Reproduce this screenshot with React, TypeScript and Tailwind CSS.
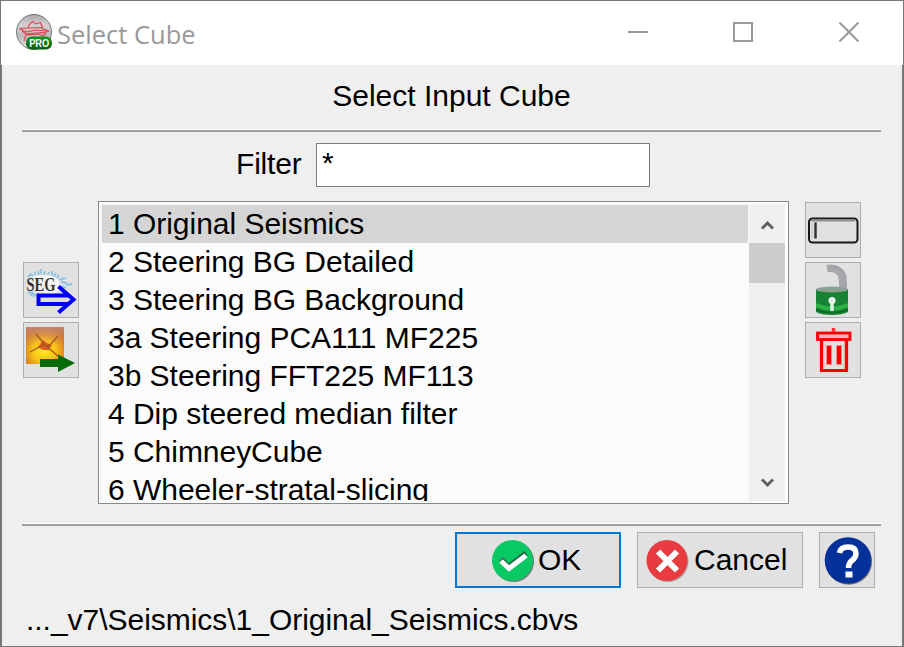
import type { ReactNode } from 'react';

const cubes = [
  '1 Original Seismics',
  '2 Steering BG Detailed',
  '3 Steering BG Background',
  '3a Steering PCA111 MF225',
  '3b Steering FFT225 MF113',
  '4 Dip steered median filter',
  '5 ChimneyCube',
  '6 Wheeler-stratal-slicing',
];

function IconButton({ label, children }: { label: string; children: ReactNode }) {
  return (
    <button
      aria-label={label}
      className="flex h-14 w-14 shrink-0 items-center justify-center border border-[#adadad] bg-[#e1e1e1]"
    >
      {children}
    </button>
  );
}

function Separator() {
  return <div className="mr-[21px] ml-5 h-[3px] shrink-0 border-t border-white bg-[#a0a0a0]" />;
}

function AppLogo() {
  return (
    <svg width="38" height="38" viewBox="0 0 38 38" className="shrink-0">
      <defs>
        <linearGradient id="orb" x1="0" y1="0" x2="0" y2="1">
          <stop offset="0" stopColor="#a8a8a8" />
          <stop offset="0.3" stopColor="#d2d2d2" />
          <stop offset="0.6" stopColor="#bcbcbc" />
          <stop offset="1" stopColor="#e0e0e0" />
        </linearGradient>
        <linearGradient id="pro" x1="0" y1="0" x2="0" y2="1">
          <stop offset="0" stopColor="#169422" />
          <stop offset="1" stopColor="#075c12" />
        </linearGradient>
      </defs>
      <circle cx="19" cy="19" r="17.500" fill="url(#orb)" stroke="#777" strokeWidth="1" />
      <path
        d="M4.500 15.500L13 15L14 12L17.500 8.500L21 11L25.500 9.500L28 16L34 18M4.500 15.500L11 19L21 17L34 18.500M13 15L28 14.500M7 18L11 21L27 19.500L31 20L28 23L24 21L11 22L9 28"
        fill="none"
        stroke="#e5424c"
        strokeWidth="1.100"
      />
      <rect x="11" y="23.500" width="26" height="13" rx="6" fill="url(#pro)" />
      <text x="24.200" y="33.500" textAnchor="middle" textLength="20" lengthAdjust="spacingAndGlyphs" fontFamily="Liberation Sans, sans-serif" fontSize="10" fontWeight="700" fill="#fff">
        PRO
      </text>
    </svg>
  );
}

function SegIcon() {
  return (
    <svg width="54" height="54" viewBox="0 0 54 54">
      <path
        d="M4 14l3-3M7 11l2 2M10 9l2 3M14 8l1 4M17 6v5M21 8l-1 4M25 9l-1 3M28 8v5M32 10l-2 4M35 12l-2 3M39 15l-4 2M43 20l-6-1M48 21l-6 1M42 25l-5-2M4 30l5-1M6 33l4-3M12 31l-3 3M3 17l3 1M37 17l5-2"
        stroke="#8cc3e2"
        strokeWidth="1.800"
      />
      <path d="M4 16L15 12L29 13L35 18L36 27L29 31L5 28Z" fill="#f5f5f5" />
      <text x="2.500" y="27.500" textLength="29" lengthAdjust="spacingAndGlyphs" fontFamily="Liberation Serif, serif" fontSize="18" fontWeight="700" fill="#333">
        SEG
      </text>
      <path d="M14 31H35V26L34 24L49.500 36.500L34 49.500L36 46V42H14Z" fill="#dedede" />
      <path d="M34.500 23.500L49.500 36.500L34.500 49.500M44 32.500H14.500V41H44" fill="none" stroke="#0000fa" strokeWidth="4" />
    </svg>
  );
}

function ExportIcon() {
  return (
    <svg width="54" height="54" viewBox="0 0 54 54">
      <defs>
        <radialGradient id="amber" cx="48%" cy="65%" r="75%">
          <stop offset="0" stopColor="#ffe91f" />
          <stop offset="0.400" stopColor="#f9c51b" />
          <stop offset="0.700" stopColor="#dc851e" />
          <stop offset="1" stopColor="#b34a20" />
        </radialGradient>
        <linearGradient id="amberTop" x1="0" y1="0" x2="0" y2="1">
          <stop offset="0" stopColor="#c38270" />
          <stop offset="0.500" stopColor="#e19b52" stopOpacity="0" />
        </linearGradient>
      </defs>
      <rect x="2" y="4" width="38" height="37" rx="1" fill="url(#amber)" />
      <rect x="2" y="4" width="38" height="37" rx="1" fill="url(#amberTop)" />
      <path d="M14 24L19 17L23 20L28 22L25 27L19 27Z" fill="#df5926" />
      <path d="M12 11L21 22L34 33M34 13L25 23L19 22L6 29" fill="none" stroke="#a6561d" strokeWidth="1.300" />
      <path d="M16 36H34V31.500L51 40L34 49V44H16Z" fill="#066b07" />
    </svg>
  );
}

function FieldIcon() {
  return (
    <svg width="54" height="54" viewBox="0 0 54 54">
      <rect x="3" y="15.500" width="48.500" height="24" rx="3.500" fill="none" stroke="#191919" strokeWidth="2" />
      <path d="M5 17.500H49" stroke="#8f8f8f" strokeWidth="2" />
      <path d="M9.500 19.500V35.500" stroke="#333" strokeWidth="2.500" />
      <path d="M6 20V35" stroke="#bcbcbc" />
    </svg>
  );
}

function UnlockIcon() {
  return (
    <svg width="54" height="54" viewBox="0 0 54 54">
      <path d="M21 5.500Q31 4 35 11Q37.500 16 36.500 27" fill="none" stroke="#a5a7aa" strokeWidth="7.500" />
      <path d="M29 3.500Q37 5 40 13V27" fill="none" stroke="#8b8e92" strokeWidth="1.500" strokeOpacity="0.500" />
      <path d="M10 26H42V49Q36 52 26 52Q15 52 10 49Z" fill="#178334" />
      <path d="M10 40Q26 47 42 40V44.500Q26 51 10 44.500Z" fill="#2cb045" />
      <path d="M10 46.500Q26 53 42 46.500" fill="none" stroke="#116c2c" strokeWidth="2" />
      <ellipse cx="26" cy="26.500" rx="16" ry="3" fill="#8da193" />
      <circle cx="26" cy="37.500" r="3.500" fill="#f2fff3" />
      <path d="M26 37V48" stroke="#dcf5e0" strokeWidth="3.500" />
    </svg>
  );
}

function TrashIcon() {
  return (
    <svg width="54" height="54" viewBox="0 0 54 54" fill="none">
      <path d="M15.500 16H40.500V47.500H15.500Z" stroke="#fa0000" strokeWidth="3.200" />
      <path d="M17.800 18V45.500M38.200 18V45.500" stroke="#ffa0a0" strokeWidth="1" />
      <rect x="11.500" y="10" width="32.500" height="6.500" fill="#f4b5b5" stroke="#fa0000" strokeWidth="2.800" />
      <path d="M27.500 9V5" stroke="#f33" strokeWidth="3.500" />
      <path d="M23 22V42M33 22V42" stroke="#ff8888" strokeWidth="6" />
      <path d="M23 23V41M33 23V41" stroke="#fa0000" strokeWidth="4" />
    </svg>
  );
}

function OkIcon() {
  return (
    <svg width="44" height="46" viewBox="0 0 44 46" className="shrink-0">
      <circle cx="22.600" cy="24.500" r="20.500" fill="#777" />
      <circle cx="21.500" cy="23.500" r="20.500" fill="#08c964" />
      <path d="M10 22L17.500 29.500L35 16" fill="none" stroke="#286948" strokeWidth="5" />
      <path d="M10 24L18 31.500L35 18.500" fill="none" stroke="#fff" strokeWidth="5" />
    </svg>
  );
}

function CancelIcon() {
  return (
    <svg width="44" height="46" viewBox="0 0 44 46" className="shrink-0">
      <circle cx="23" cy="24.500" r="20.500" fill="#a6a6a6" />
      <circle cx="22" cy="23.500" r="20.500" fill="#e83c40" />
      <path d="M12.500 14L31.500 33M31.500 14L12.500 33" stroke="#a83337" strokeWidth="5.500" />
      <path d="M13 14.500L32 33.500M32 14.500L13 33.500" stroke="#fff" strokeWidth="6" />
    </svg>
  );
}

function HelpIcon() {
  return (
    <svg width="54" height="54" viewBox="0 0 54 54">
      <circle cx="28.800" cy="28.500" r="23.300" fill="#777" />
      <circle cx="28" cy="27.500" r="23.300" fill="#03319b" />
      <path d="M19.500 20Q20.500 14 28 14Q36 14 36 20.500Q36 24.500 32 27.500Q28.500 30 28.500 35" fill="none" stroke="#fff" strokeWidth="5.500" />
      <rect x="25.500" y="38.500" width="7" height="6" fill="#fff" />
    </svg>
  );
}

export default function App() {
  return (
    <div className="flex h-[647px] w-[904px] flex-col overflow-hidden border border-[#777] bg-[#efefef] font-['Liberation_Sans',Arial,sans-serif] text-[30px] leading-[38px] text-black">
      <header className="flex h-16 shrink-0 items-start bg-white">
        <div className="flex pt-3 pl-3.5">
          <AppLogo />
          <h1 className="ml-1 pt-0.5 font-['Open_Sans',sans-serif] text-[25.500px] leading-[38px] whitespace-nowrap text-[#999]">
            Select Cube
          </h1>
        </div>
        <div className="mr-[43px] ml-auto flex pt-5">
          <svg width="232" height="24" viewBox="0 0 232 24" fill="none" stroke="#999" strokeWidth="2">
            <path d="M0 11H20" />
            <path d="M106 2H124V20H106Z" />
            <path d="M211.500 1.500L230.500 20.500M230.500 1.500L211.500 20.500" />
          </svg>
        </div>
      </header>

      <main className="flex min-h-0 flex-1 flex-col border-r border-l border-[#777]">
        <h2 className="h-16 shrink-0 pt-3 pr-px text-center">Select Input Cube</h2>
        <Separator />

        <div className="mt-[11px] ml-[234px] flex h-11 shrink-0">
          <label className="w-20 pt-0.5 tracking-[-0.2px]">Filter</label>
          <div className="w-[334px] border border-[#7a7a7a] bg-white pl-[5px]">*</div>
        </div>

        <div className="mt-3.5 flex h-[303px] shrink-0 pl-[21px]">
          <div className="flex w-14 flex-col gap-1 pt-[61px]">
            <IconButton label="Import SEG-Y"><SegIcon /></IconButton>
            <IconButton label="Export"><ExportIcon /></IconButton>
          </div>
          <div className="ml-[19px] flex w-[691px] border border-[#828790] bg-white p-px">
            <div className="flex min-w-0 flex-1 border-t-2 border-b border-l-2 border-[#f5f5f5]">
              <ul className="min-w-0 flex-1 overflow-hidden bg-[#fbfbfb] tracking-[-0.03px]">
                {cubes.map((cube, index) => (
                  <li key={cube} className={`mr-px h-[38px] pl-1.5 whitespace-nowrap ${index === 0 ? 'bg-[#d5d5d5]' : ''}`}>
                    {cube}
                  </li>
                ))}
              </ul>
              <div className="mr-0.5 flex w-9 flex-col bg-[#efefef]">
                <div className="flex h-[38px] items-center justify-center pt-0.5">
                  <svg width="14" height="12" viewBox="0 0 14 12"><path d="M2 9.500L7.500 4L13 9.500" fill="none" stroke="#606060" strokeWidth="3" /></svg>
                </div>
                <div className="h-10 bg-[#cdcdcd]" />
                <div className="mt-auto flex h-[38px] items-center justify-center">
                  <svg width="14" height="12" viewBox="0 0 14 12"><path d="M2 3.500L7.500 9L13 3.500" fill="none" stroke="#606060" strokeWidth="3" /></svg>
                </div>
              </div>
            </div>
          </div>
          <div className="ml-4 flex w-14 flex-col gap-1 pt-px">
            <IconButton label="Rename"><FieldIcon /></IconButton>
            <IconButton label="Lock"><UnlockIcon /></IconButton>
            <IconButton label="Delete"><TrashIcon /></IconButton>
          </div>
        </div>

        <div className="h-[19px] shrink-0" />
        <Separator />

        <footer className="mt-1.5 flex h-14 shrink-0 justify-end gap-4 pr-[27px]">
          <button className="flex w-[166px] items-center border-2 border-[#0078d7] bg-[#e1e1e1] pl-[34px]">
            <OkIcon />
            <span className="ml-[3px] -mt-px">OK</span>
          </button>
          <button className="flex w-[166px] items-center border border-[#adadad] bg-[#e1e1e1] pl-[7px]">
            <CancelIcon />
            <span className="ml-[5px] -mt-px">Cancel</span>
          </button>
          <IconButton label="Help"><HelpIcon /></IconButton>
        </footer>

        <p className="mt-[13px] ml-6 whitespace-nowrap tracking-[-0.03px]">..._v7\Seismics\1_Original_Seismics.cbvs</p>
      </main>
    </div>
  );
}
